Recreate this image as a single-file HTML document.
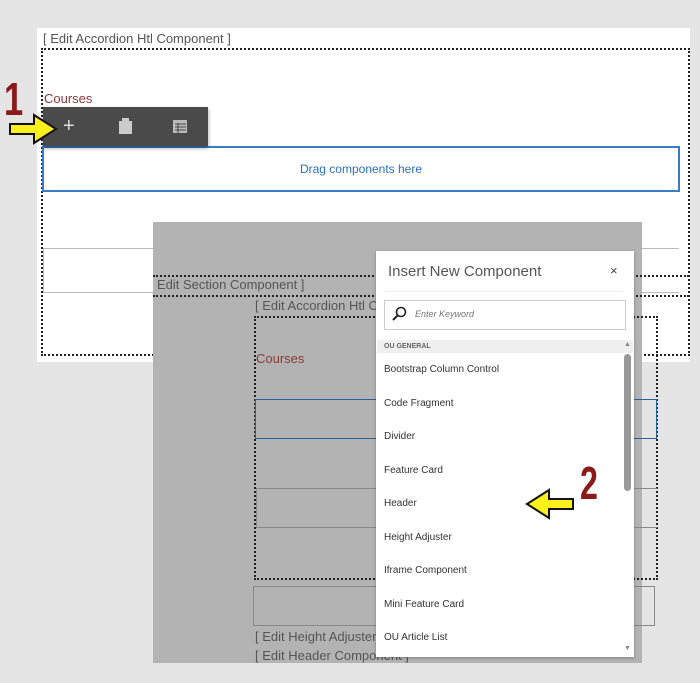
<!DOCTYPE html>
<html><head><style>
body{margin:0;width:700px;height:683px;background:#e5e5e5;position:relative;overflow:hidden;font-family:"Liberation Sans",sans-serif}
.a{position:absolute}
.t{color:#555;font-size:13px;white-space:nowrap}
.dash{border:2px dotted #222}
.it{position:absolute;left:384px;font-size:10px;color:#333;white-space:nowrap}
</style></head><body>
<div class="a" style="left:37px;top:28px;width:653px;height:334px;background:#fff"></div>
<div class="a t" style="left:43px;top:31px">[ Edit Accordion Htl Component ]</div>
<div class="a dash" style="left:41px;top:48px;width:645px;height:304px"></div>
<div class="a" style="left:44px;top:91px;color:#8b3a3a;font-size:13px">Courses</div>
<div class="a" style="left:42px;top:146px;width:634px;height:42px;border:2px solid #3a7bc8;color:#2d6fbd;font-size:12px;text-align:center;line-height:42px">Drag components here</div>
<div class="a" style="left:43px;top:248px;width:635px;height:43px;border-top:1px solid #bbb;border-bottom:1px solid #bbb;border-left:1px solid #bbb"></div>
<div class="a" style="left:43px;top:107px;width:165px;height:39px;background:#4a4a4a;box-shadow:0 2px 4px rgba(0,0,0,.4)"></div>
<div class="a" style="left:63px;top:115px;color:#ddd;font-size:20px">+</div>
<svg class="a" style="left:118px;top:118px" width="16" height="17"><rect x="1" y="3" width="13" height="13" fill="#ccc"/><rect x="4" y="0" width="7" height="4" fill="#ccc"/></svg>
<svg class="a" style="left:172px;top:119px" width="16" height="15"><rect x="1" y="1" width="14" height="13" fill="#bbb"/><path d="M3 5h11M3 8h11M3 11h11M6 4v10" stroke="#4a4a4a" stroke-width="1"/></svg>
<div class="a" style="left:4px;top:72px;color:#8b1a1a;font-size:46px;font-weight:bold;transform:scaleX(.75);transform-origin:left">1</div>
<svg class="a" style="left:8px;top:112px" width="50" height="34"><path d="M2 12h24V3l22 14-22 14v-9H2z" fill="#ffef1a" stroke="#111" stroke-width="2"/></svg>

<div class="a" style="left:153px;top:222px;width:489px;height:441px;background:#b3b3b3"></div>
<div class="a" style="left:153px;top:275px;width:536px;height:18px;border-top:2px dotted #222;border-bottom:2px dotted #222"></div>
<div class="a t" style="left:157px;top:277px;color:#555">Edit Section Component ]</div>
<div class="a t" style="left:255px;top:298px">[ Edit Accordion Htl Co</div>
<div class="a dash" style="left:254px;top:316px;width:400px;height:260px"></div>
<div class="a" style="left:256px;top:351px;color:#8b3a3a;font-size:13px">Courses</div>
<div class="a" style="left:255px;top:399px;width:400px;height:38px;border:1px solid #2d5f9a"></div>
<div class="a" style="left:256px;top:488px;width:400px;height:38px;border-top:1px solid #888;border-bottom:1px solid #888;border-left:1px solid #888"></div>
<div class="a" style="left:253px;top:586px;width:400px;height:38px;border:1px solid #888"></div>
<div class="a t" style="left:255px;top:629px">[ Edit Height Adjuster</div>
<div class="a t" style="left:255px;top:648px">[ Edit Header Component ]</div>

<div class="a" style="left:376px;top:251px;width:258px;height:406px;background:#fff;box-shadow:0 1px 3px rgba(0,0,0,.3)"></div>
<div class="a" style="left:388px;top:263px;font-size:15px;color:#555">Insert New Component</div>
<div class="a" style="left:610px;top:263px;font-size:13px;color:#444">×</div>
<div class="a" style="left:385px;top:291px;width:238px;height:1px;background:#eee"></div>
<div class="a" style="left:384px;top:300px;width:240px;height:28px;border:1px solid #ccc"></div>
<svg class="a" style="left:391px;top:306px" width="16" height="16"><circle cx="10" cy="6" r="4.5" fill="none" stroke="#222" stroke-width="1.6"/><path d="M7 9l-5 5" stroke="#222" stroke-width="2"/></svg>
<div class="a" style="left:415px;top:309px;font-size:9px;color:#777;font-style:italic">Enter Keyword</div>
<div class="a" style="left:377px;top:340px;width:256px;height:13px;background:#efefef;font-size:7px;color:#666;font-weight:bold;line-height:13px;text-indent:7px">OU GENERAL</div>
<div class="it" style="top:364px">Bootstrap Column Control</div>
<div class="it" style="top:398px">Code Fragment</div>
<div class="it" style="top:431px">Divider</div>
<div class="it" style="top:465px">Feature Card</div>
<div class="it" style="top:498px">Header</div>
<div class="it" style="top:532px">Height Adjuster</div>
<div class="it" style="top:565px">Iframe Component</div>
<div class="it" style="top:599px">Mini Feature Card</div>
<div class="it" style="top:632px">OU Article List</div>
<div class="a" style="left:624px;top:354px;width:7px;height:137px;background:#999;border-radius:4px"></div>
<div class="a" style="left:624px;top:341px;font-size:7px;color:#888">▲</div>
<div class="a" style="left:624px;top:645px;font-size:7px;color:#888">▼</div>
<svg class="a" style="left:525px;top:487px" width="50" height="34"><path d="M48 12H24V3L2 17l22 14v-9h24z" fill="#ffef1a" stroke="#111" stroke-width="2"/></svg>
<div class="a" style="left:580px;top:456px;color:#8b1a1a;font-size:46px;font-weight:bold;transform:scaleX(.7);transform-origin:left">2</div>
</body></html>
